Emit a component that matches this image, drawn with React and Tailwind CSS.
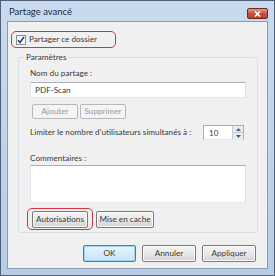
import React from "react";

const font = { fontFamily: 'Lato, "Open Sans", sans-serif' };

function Btn({ children, w, disabled, def }) {
  const base = "flex items-center justify-center rounded-[2px] text-[8.2px] leading-none whitespace-nowrap";
  if (disabled)
    return (
      <div className={`${base} ${w} h-[15px] border border-[#b5b9bd] bg-[#f4f4f4] text-[#9a9a9a]`}>{children}</div>
    );
  if (def)
    return (
      <div className={`${base} ${w} h-[17px] border border-[#3c7fb1] bg-gradient-to-b from-[#eaf6fd] to-[#c4e2f4] text-[#3a3a3a] shadow-[inset_0_0_0_1px_#9fd5f2]`}>{children}</div>
    );
  return (
    <div className={`${base} ${w} h-[17px] border border-[#7a7a7a] bg-gradient-to-b from-[#f4f4f4] via-[#e8e8e8] to-[#d2d2d2] text-[#3a3a3a] shadow-[inset_0_0_0_1px_#fbfbfb]`}>{children}</div>
  );
}

export default function App() {
  return (
    <div style={font} className="w-[275px] h-[276px] border border-[#4e6078] bg-gradient-to-b from-[#c9daee] to-[#b7cde6] flex flex-col text-[#3a3a3a]">
      {/* Title bar */}
      <div className="h-[20px] flex items-start justify-between pl-[8px] pr-[6px]">
        <span className="text-[9.5px] mt-[6px] leading-none text-[#1e2b3c]">Partage avancé</span>
        <div className="mt-[7px] w-[21px] h-[11px] rounded-[2px] border border-[#6d2a22] bg-gradient-to-b from-[#e29a8a] via-[#c8513e] to-[#b8402c] flex items-center justify-center">
          <svg width="7" height="6" viewBox="0 0 7 6">
            <path d="M1 0.5 L6 5.5 M6 0.5 L1 5.5" stroke="#fff" strokeWidth="1.6" />
          </svg>
        </div>
      </div>
      {/* Client */}
      <div className="ml-[6px] w-[261px] h-[248px] border border-[#8a9cb3] bg-[#f0f0f0] flex flex-col">
        {/* checkbox row */}
        <div className="mt-[9px] ml-[3px] w-[105px] h-[17px] border-[1.5px] border-[#d4333f] rounded-[5px] flex items-center pl-[4px]">
          <div className="w-[10px] h-[10px] border border-[#8e8f8f] bg-gradient-to-br from-[#f4f4f4] to-[#ffffff] flex items-center justify-center">
            <svg width="8" height="8" viewBox="0 0 8 8">
              <path d="M1 4.2 L3 6.5 L7 1" stroke="#24408f" strokeWidth="1.6" fill="none" />
            </svg>
          </div>
          <span className="ml-[3px] text-[8.2px] leading-none whitespace-nowrap">Partager ce dossier</span>
        </div>
        {/* group */}
        <div className="relative mt-[9px] ml-[10px] w-[240px] h-[176px] border border-[#d5dfe5] rounded-[3px] flex flex-col pl-[11px]">
          <span className="absolute left-[5px] top-[-6px] px-[2px] bg-[#f0f0f0] text-[8.2px] leading-[11px]">Paramètres</span>
          <span className="mt-[10px] text-[8.2px] leading-[11px]">Nom du partage :</span>
          <div className="mt-[3px] w-[216px] h-[16px] bg-white border border-[#abadb3] border-r-[#dbdfe6] border-b-[#e3e9ef] border-l-[#e2e3ea] flex items-center pl-[4px] text-[8.2px]">PDF-Scan</div>
          <div className="mt-[6px] ml-[2px] flex gap-[2px]">
            <Btn w="w-[46px]" disabled>Ajouter</Btn>
            <Btn w="w-[46px]" disabled>Supprimer</Btn>
          </div>
          <div className="mt-[6px] flex items-center">
            <span className="text-[8.2px] leading-none whitespace-nowrap">Limiter le nombre d'utilisateurs simultanés à :</span>
            <div className="ml-auto mr-[13px] w-[41px] h-[15px] bg-white border border-[#abadb3] border-b-[#e3e9ef] flex items-center">
              <span className="pl-[5px] text-[8px] leading-none flex-1">10</span>
              <div className="w-[11px] h-full flex flex-col border-l border-[#c9cccf]">
                <div className="flex-1 bg-[#e9ecef] border-b border-[#c9cccf] flex items-center justify-center">
                  <svg width="5" height="3" viewBox="0 0 5 3"><path d="M0 3 L2.5 0 L5 3 Z" fill="#4d6185" /></svg>
                </div>
                <div className="flex-1 bg-[#e9ecef] flex items-center justify-center">
                  <svg width="5" height="3" viewBox="0 0 5 3"><path d="M0 0 L2.5 3 L5 0 Z" fill="#4d6185" /></svg>
                </div>
              </div>
            </div>
          </div>
          <span className="mt-[13px] text-[8.2px] leading-[11px]">Commentaires :</span>
          <div className="mt-[1px] w-[216px] h-[38px] bg-white border border-[#abadb3] border-r-[#dbdfe6] border-b-[#e3e9ef] border-l-[#e2e3ea]" />
          <div className="mt-[5px] ml-[-3px] flex items-center">
            <div className="w-[66px] h-[22px] border-[1.5px] border-[#d4333f] rounded-[5px] flex items-center justify-center">
              <Btn w="w-[56px]">Autorisations</Btn>
            </div>
            <div className="ml-[3px]">
              <Btn w="w-[58px]">Mise en cache</Btn>
            </div>
          </div>
        </div>
        {/* bottom buttons */}
        <div className="mt-[12px] ml-[75px] flex gap-[6px]">
          <Btn w="w-[53px]" def>OK</Btn>
          <Btn w="w-[54px]">Annuler</Btn>
          <Btn w="w-[54px]">Appliquer</Btn>
        </div>
      </div>
    </div>
  );
}
